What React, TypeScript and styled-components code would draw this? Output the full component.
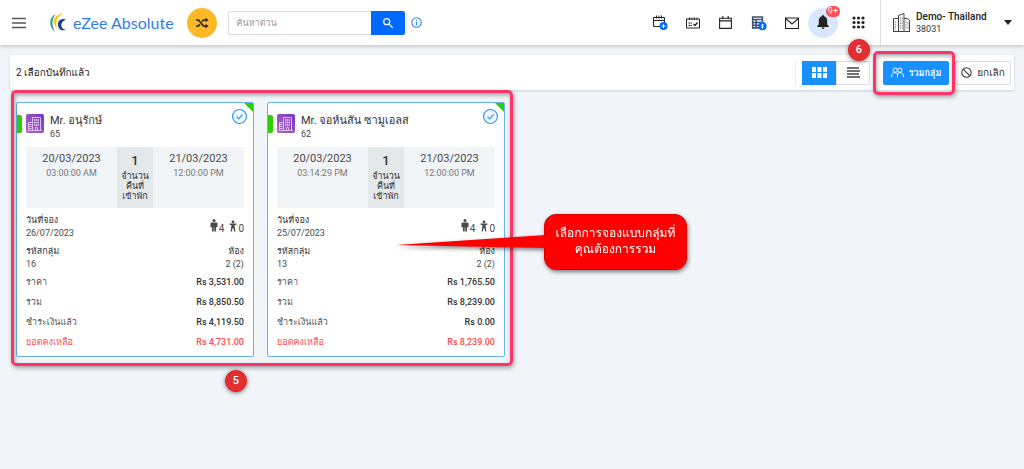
import React from "react";
import styled, { createGlobalStyle, css } from "styled-components";

const GlobalStyle = createGlobalStyle`
  *, *::before, *::after { box-sizing: border-box; }
  body {
    margin: 0;
    background: #f1f5f9;
    color: #4a4a4a;
    font-family: Roboto, Loma, Waree, "Noto Sans Thai Looped", "Noto Sans Thai", "Noto Sans", sans-serif;
    font-size: 9px;
    line-height: 12px;
  }
  button, input { font-family: inherit; }
  button { cursor: pointer; }
`;

const Page = styled.div`
  min-height: 100vh;
`;

/* ---------- Header ---------- */

const Header = styled.header`
  display: flex;
  align-items: center;
  height: 45px;
  padding: 0 12px 0 10px;
  background: #fff;
  box-shadow: 0 1px 4px rgba(0, 0, 0, 0.25);
`;

const IconButton = styled.button`
  display: flex;
  align-items: center;
  justify-content: center;
  width: 17px;
  height: 24px;
  padding: 0;
  border: 0;
  background: none;
  color: #222;
`;

const Logo = styled.a`
  display: flex;
  align-items: center;
  gap: 6px;
  margin-left: 22px;
  color: #2f80ed;
  font-family: Lato, sans-serif;
  font-size: 16px;
  line-height: 20px;
  text-decoration: none;
  white-space: nowrap;
`;

const ShuffleButton = styled(IconButton)`
  width: 30px;
  height: 30px;
  margin-left: 13px;
  border-radius: 50%;
  background: #fdb827;
`;

const Search = styled.form`
  display: flex;
  width: 177px;
  height: 24px;
  margin: 0 6px 0 11px;
`;

const SearchInput = styled.input`
  flex: 1;
  min-width: 0;
  padding: 0 8px;
  border: 1px solid #ddd;
  border-right: 0;
  border-radius: 2px 0 0 2px;
  color: #444;
  font-size: 9px;
  outline: 0;
  &::placeholder { color: #999; opacity: 1; }
`;

const SearchButton = styled(IconButton)`
  width: 34px;
  border-radius: 0 2px 2px 0;
  background: #0069ff;
`;

const Tools = styled.nav`
  display: flex;
  align-items: center;
  gap: 16px;
  margin-left: auto;
`;

const BellButton = styled(IconButton)`
  position: relative;
  width: 30px;
  height: 30px;
  margin: 0 -4px 0 -8px;
  border-radius: 50%;
  background: #d9e7fd;
`;

const Count = styled.span`
  position: absolute;
  top: -2px;
  right: -2px;
  padding: 0 2px;
  border-radius: 6px;
  background: #ff4d4f;
  color: #fff;
  font-size: 9px;
  line-height: 11px;
`;

const Account = styled.button`
  display: flex;
  align-items: center;
  height: 45px;
  width: 132px;
  margin-left: 13px;
  padding: 0 0 0 12px;
  border: 0;
  border-left: 1px solid #ddd;
  background: none;
  color: #333;
  text-align: left;
  font-size: 9px;
  line-height: 12px;
`;

const AccountText = styled.span`
  flex: 1;
  margin-left: 6px;
  white-space: nowrap;
  strong { display: block; font-size: 10px; font-weight: 500; color: #222; }
`;

/* ---------- Selection toolbar ---------- */

const Toolbar = styled.section`
  display: flex;
  align-items: center;
  height: 35px;
  margin: 10px 10px 12px;
  padding: 0 3px 0 6px;
  background: #fff;
  border-radius: 2px;
  box-shadow: 0 1px 3px rgba(60, 80, 100, 0.2);
`;

const SelectedText = styled.p`
  flex: 1;
  margin: 0;
  color: #222;
  font-size: 10px;
`;

const ViewSwitch = styled.div`
  display: flex;
  padding-left: 6px;
  border-left: 1px solid #eee;
`;

const ViewButton = styled(IconButton)<{ $active?: boolean }>`
  width: 34px;
  border: 1px solid #ddd;
  color: #444;
  ${(p) => p.$active && css`background: #1890ff; border-color: #1890ff; color: #fff;`}
`;

const Actions = styled.div`
  display: flex;
  gap: 6px;
  margin-left: 13px;
`;

const ActionWrap = styled.div`
  position: relative;
`;

const ActionButton = styled.button<{ $primary?: boolean }>`
  display: flex;
  align-items: center;
  justify-content: center;
  gap: 5px;
  min-width: ${(p) => (p.$primary ? 66 : 56)}px;
  height: 24px;
  padding: 0 5px;
  border: 1px solid ${(p) => (p.$primary ? "#1890ff" : "#ddd")};
  border-radius: 2px;
  background: ${(p) => (p.$primary ? "#1890ff" : "#fff")};
  color: ${(p) => (p.$primary ? "#fff" : "#333")};
  font-size: ${(p) => (p.$primary ? 9 : 10)}px;
  font-weight: ${(p) => (p.$primary ? 700 : 400)};
  white-space: nowrap;
`;

/* ---------- Booking cards ---------- */

const Main = styled.main`
  padding: 0 16px 48px;
`;

const CardGroup = styled.div`
  position: relative;
  display: grid;
  grid-template-columns: 1fr 1fr;
  gap: 13px;
  width: calc(50% - 7px);
`;

const Card = styled.article`
  position: relative;
  padding: 11px 9px 4px;
  border: 1px solid #69b1f5;
  border-radius: 2px;
  background: #fff;
`;

const StatusTab = styled.span`
  position: absolute;
  top: 12px;
  left: 0;
  width: 5px;
  height: 18px;
  border-radius: 0 2px 2px 0;
  background: #2fd000;
`;

const Corner = styled.span`
  position: absolute;
  top: 0;
  right: 0;
  border-top: 9px solid #2fd000;
  border-left: 9px solid transparent;
`;

const Check = styled.svg`
  position: absolute;
  top: 5px;
  right: 5px;
`;

const Guest = styled.header`
  display: flex;
  align-items: flex-start;
  gap: 6px;
  height: 33px;
`;

const GuestName = styled.h2`
  margin: 0;
  color: #333;
  font-size: 11px;
  font-weight: 400;
  line-height: 13px;
  white-space: nowrap;
`;

const GuestId = styled.p`
  margin: 1px 0 0;
`;

const Stay = styled.div`
  display: grid;
  grid-template-columns: 1fr 36px 1fr;
  height: 61px;
  margin-bottom: 6px;
  background: #f1f5f8;
  text-align: center;
`;

const StayDate = styled.div`
  padding-top: 5px;
  color: #777;
  line-height: 14px;
  strong { display: block; color: #4a4a4a; font-size: 11px; font-weight: 400; }
`;

const Nights = styled.div`
  padding-top: 7px;
  background: #e3e8eb;
  color: #333;
  line-height: 10px;
  strong { display: block; margin-bottom: 3px; font-size: 13px; font-weight: 500; line-height: 14px; }
`;

const InfoRow = styled.div`
  display: flex;
  align-items: center;
  justify-content: space-between;
  height: 26px;
  line-height: 13px;
  & + & { margin-top: 5px; }
`;

const InfoCell = styled.div<{ $end?: boolean }>`
  text-align: ${(p) => (p.$end ? "right" : "left")};
  span { display: block; color: #333; }
`;

const People = styled.div`
  display: flex;
  align-items: center;
  gap: 5px;
  font-size: 10px;
  span { display: flex; align-items: flex-end; gap: 1px; }
  svg { margin-bottom: 3px; }
`;

const Amounts = styled.dl`
  margin: 1px 0 0;
`;

const Amount = styled.div<{ $due?: boolean }>`
  display: flex;
  align-items: center;
  justify-content: space-between;
  height: 20px;
  color: ${(p) => (p.$due ? "#ff4d4f" : "#555")};
  dd { margin: 0; font-weight: 500; color: ${(p) => (p.$due ? "#ff4d4f" : "#333")}; }
`;

/* ---------- Guide annotations ---------- */

const frame = css`
  position: absolute;
  border: 3px solid #fb3569;
  border-radius: 5px;
  pointer-events: none;
  box-shadow: 1px 2px 4px rgba(0, 0, 0, 0.35), inset 1px 2px 4px rgba(0, 0, 0, 0.35);
`;

const GroupFrame = styled.div`
  ${frame}
  inset: -12px -8px -9px -5px;
`;

const ButtonFrame = styled.div`
  ${frame}
  inset: -10px -6px -10px -10px;
`;

const Step = styled.span`
  position: absolute;
  display: grid;
  place-items: center;
  width: 22px;
  height: 22px;
  border-radius: 50%;
  border: 1px solid #f01818;
  background: #e03034;
  box-shadow: 0 1px 4px rgba(0, 0, 0, 0.5);
  color: #fff;
  font-size: 11px;
  font-weight: 500;
`;

const GroupStep = styled(Step)`
  bottom: -35px;
  left: 209px;
`;

const ButtonStep = styled(Step)`
  top: -22px;
  left: -35px;
`;

const Callout = styled.aside`
  position: absolute;
  top: 112px;
  left: calc(100% + 39px);
  width: 143px;
  padding: 10px 4px 12px;
  border: 1px solid #d00;
  border-radius: 12px;
  background: #f00;
  filter: drop-shadow(1px 2px 2px rgba(0, 0, 0, 0.5));
  color: #fff;
  font-size: 12px;
  font-weight: 500;
  line-height: 16px;
  text-align: center;
  white-space: nowrap;
  svg { position: absolute; top: 18px; right: 100%; margin-right: -1px; }
`;

/* ---------- Icons ---------- */

type StrokeProps = { size?: number; color?: string; width?: number; children: React.ReactNode };
const Stroke = ({ size = 14, color = "#222", width = 1, children }: StrokeProps) => (
  <svg width={size} height={size} viewBox="0 0 14 14" fill="none" stroke={color} strokeWidth={width} aria-hidden="true">
    {children}
  </svg>
);

const CalendarPath = () => <path d="M1.5 3h11v9.5h-11zM1.5 5.500h11M4.500 1v3M9.500 1v3" />;

const LogoMark = () => (
  <svg width="18" height="20" viewBox="0 0 18 20" fill="none" aria-hidden="true">
    <path d="M7 1C0 4-1 13 6 19 2.500 12 2.500 6 7 1z" fill="#2a9d9a" />
    <path d="M14 1C5 1 2 9 8 15.500 6 9 8 3 14 1z" fill="#f6c915" />
    <path d="M17 6.500C10 4 6.500 11 11 16.500c2 1 4 1 6 .5-6-1-6.500-8 0-10.500z" fill="#1d3e86" />
  </svg>
);

const Hotel = () => (
  <svg width="18" height="19" viewBox="0 0 18 19" fill="none" aria-hidden="true">
    <defs>
      <linearGradient id="hotel" x1="0" y1="1" x2="1" y2="0">
        <stop offset="0" stopColor="#b366c4" />
        <stop offset="1" stopColor="#7336c4" />
      </linearGradient>
    </defs>
    <rect width="18" height="19" rx="2" fill="url(#hotel)" />
    <path d="M6.500 16V3.500h8V16M2 16.500h14M2.500 16V8.500h4M3 10.500h2.500M3 12.500h2.500M3 14.500h2.500M9.500 16v-2.500h2V16" stroke="#e7c8f5" strokeWidth=".9" />
    <path d="M8 6h5M8 8.500h5M8 11h5" stroke="#f3dcff" strokeWidth="1.400" strokeDasharray="1.300 .55" />
  </svg>
);

const Person = ({ child = false }: { child?: boolean }) => (
  <svg width="8" height="13" viewBox="0 0 8 13" fill="#4a4a4a" aria-hidden="true">
    {child ? (
      <>
        <circle cx="4" cy="2.800" r="1.400" />
        <path d="M.6 4.600h6.800v1.200L5.500 6.300l.9 6.200H5.200L4.300 9h-.6l-.9 3.500H1.600l.9-6.200L.6 5.800z" />
      </>
    ) : (
      <>
        <circle cx="4" cy="1.600" r="1.500" />
        <path d="M1.800 3.500h4.400q1.300 0 1.300 1V8.300H6v4.200H4.300V8.500h-.6v4H2V8.300H.5V4.500q0-1 1.300-1z" />
      </>
    )}
  </svg>
);

/* ---------- Data ---------- */

type Booking = {
  name: string;
  id: number;
  arrival: [string, string];
  departure: [string, string];
  booked: string;
  group: number;
  amounts: string[];
};

const bookings: Booking[] = [
  {
    name: "Mr. อนุรักษ์", id: 65,
    arrival: ["20/03/2023", "03:00:00 AM"], departure: ["21/03/2023", "12:00:00 PM"],
    booked: "26/07/2023", group: 16,
    amounts: ["Rs 3,531.00", "Rs 8,850.50", "Rs 4,119.50", "Rs 4,731.00"],
  },
  {
    name: "Mr. จอห์นสัน ซามูเอลส", id: 62,
    arrival: ["20/03/2023", "03:14:29 PM"], departure: ["21/03/2023", "12:00:00 PM"],
    booked: "25/07/2023", group: 13,
    amounts: ["Rs 1,765.50", "Rs 8,239.00", "Rs 0.00", "Rs 8,239.00"],
  },
];

const amountLabels = ["ราคา", "รวม", "ชำระเงินแล้ว", "ยอดคงเหลือ"];

const BookingCard = ({ booking }: { booking: Booking }) => (
  <Card>
    <StatusTab />
    <Corner />
    <Check width="17" height="17" viewBox="0 0 17 17" fill="none" stroke="#3498f5">
      <circle cx="8.500" cy="8.500" r="7" fill="#eef7ff" strokeWidth="1.200" />
      <path d="M5.500 8.600l2.200 2.200 3.800-4.300" strokeWidth="1.200" />
    </Check>
    <Guest>
      <Hotel />
      <div>
        <GuestName>{booking.name}</GuestName>
        <GuestId>{booking.id}</GuestId>
      </div>
    </Guest>
    <Stay>
      <StayDate><strong>{booking.arrival[0]}</strong>{booking.arrival[1]}</StayDate>
      <Nights><strong>1</strong>จำนวน<br />คืนที่<br />เข้าพัก</Nights>
      <StayDate><strong>{booking.departure[0]}</strong>{booking.departure[1]}</StayDate>
    </Stay>
    <InfoRow>
      <InfoCell><span>วันที่จอง</span>{booking.booked}</InfoCell>
      <People><span><Person />4</span><span><Person child />0</span></People>
    </InfoRow>
    <InfoRow>
      <InfoCell><span>รหัสกลุ่ม</span>{booking.group}</InfoCell>
      <InfoCell $end><span>ห้อง</span>2 (2)</InfoCell>
    </InfoRow>
    <Amounts>
      {booking.amounts.map((value, i) => (
        <Amount key={amountLabels[i]} $due={i === 3}>
          <dt>{amountLabels[i]}</dt>
          <dd>{value}</dd>
        </Amount>
      ))}
    </Amounts>
  </Card>
);

export default function App() {
  return (
    <Page>
      <GlobalStyle />
      <Header>
        <IconButton aria-label="Menu">
          <Stroke color="#555" width={1.3}><path d="M0 2.500h14M0 7h14M0 11.500h14" /></Stroke>
        </IconButton>
        <Logo href="#"><LogoMark />eZee Absolute</Logo>
        <ShuffleButton aria-label="Shuffle">
          <Stroke width={1.6}>
            <path d="M1 4h2.500l5 6H12M1 10h2.500L5 8.200M7 5.800L8.500 4H12" />
            <path d="M10.500 1.800L13.500 4l-3 2.200zM10.500 7.800l3 2.200-3 2.200z" fill="#222" stroke="none" />
          </Stroke>
        </ShuffleButton>
        <Search onSubmit={(e) => e.preventDefault()}>
          <SearchInput aria-label="ค้นหาด่วน" placeholder="ค้นหาด่วน" />
          <SearchButton aria-label="Search">
            <Stroke size={12} color="#fff" width={1.4}><circle cx="5.500" cy="5.500" r="3.500" /><path d="M8 8l4.500 4.500" /></Stroke>
          </SearchButton>
        </Search>
        <Stroke size={11} color="#2f80ed" width={1.3}><circle cx="7" cy="7" r="6" /><path d="M7 6v4.500M7 3.500v1.300" /></Stroke>
        <Tools>
          <IconButton aria-label="Add booking">
            <svg width="17" height="17" viewBox="0 0 17 17" fill="none" stroke="#222" aria-hidden="true">
              <path d="M2.500 3.500h11v9h-11zM2.500 6.500h11M5.500 1.500v3M8 1.500v3M10.500 1.500v3" />
              <circle cx="12.500" cy="12" r="4" fill="#0069ff" stroke="none" />
              <path d="M10.500 12h4M12.500 10v4" stroke="#fff" />
            </svg>
          </IconButton>
          <IconButton aria-label="Tasks">
            <Stroke><path d="M.5 3h13v9H.5zM3.500 1.500v2.500M6 1.500v2.500M8.500 1.500v2.500M11 1.500v2.500" /><path d="M2.500 7h3.500M2.500 9.500h3.500" strokeDasharray="1.500 .5" /><path d="M7.500 8l1.500 1.500 2.500-3" strokeWidth="1.300" /></Stroke>
          </IconButton>
          <IconButton aria-label="Calendar"><Stroke size={15}><CalendarPath /></Stroke></IconButton>
          <IconButton aria-label="Rates">
            <Stroke size={16} color="#3f5573">
              <path d="M1.500 1.700h8.500v9.600H1.500zM1.500 4H10M1.500 6.500H10M1.500 9H10M4.500 4v7" strokeWidth="1.400" />
              <circle cx="10" cy="9.800" r="3.600" fill="#0069ff" stroke="none" />
              <path d="M11.200 8.500H9.500q-.8.700 0 1.300h1q.8.700 0 1.300H8.900M10 7.700v4.200" stroke="#fff" strokeWidth=".7" />
            </Stroke>
          </IconButton>
          <IconButton aria-label="Mail"><Stroke width={1.1}><path d="M.5 2h13v10.500H.5zM.5 2.500L7 8l6.500-5.500" /></Stroke></IconButton>
          <BellButton aria-label="Notifications">
            <svg width="14" height="15" viewBox="0 0 14 15" fill="#222" aria-hidden="true">
              <path d="M7 0q1 0 1 1.300 3 .7 3.200 4.200v4l1.500 1.500v1H1.300v-1l1.500-1.500v-4Q3 2 6 1.300 6 0 7 0zM5.500 12.500h3q-.3 1.500-1.500 1.500t-1.500-1.500z" />
            </svg>
            <Count>9+</Count>
          </BellButton>
          <IconButton aria-label="Apps">
            <svg width="13" height="13" viewBox="0 0 13 13" fill="#222" aria-hidden="true">
              {[2, 6.5, 11].map((x) => [2, 6.5, 11].map((y) => <circle key={`${x}-${y}`} cx={x} cy={y} r="1.600" />))}
            </svg>
          </IconButton>
        </Tools>
        <Account>
          <svg width="17" height="19" viewBox="0 0 17 19" fill="none" stroke="#444" aria-hidden="true">
            <path d="M5.500 18V2.500l5.500-2V18M.5 18V5.500h5M11 5.500h3l2.500 2V18M0 18.500h17" />
            <path d="M7.300 4v12M9.300 4v12M2.300 8v8.500M13 8v8.500M15 9v7.500" stroke="#777" strokeWidth=".8" strokeDasharray="1.800 .8" />
          </svg>
          <AccountText><strong>Demo- Thailand</strong>38031</AccountText>
          <svg width="8" height="5" viewBox="0 0 8 5" fill="#222" aria-hidden="true"><path d="M0 0h8L4 5z" /></svg>
        </Account>
      </Header>

      <Toolbar>
        <SelectedText>2 เลือกบันทึกแล้ว</SelectedText>
        <ViewSwitch>
          <ViewButton $active aria-label="Grid view">
            <svg width="15" height="11" viewBox="0 0 15 11" fill="currentColor" aria-hidden="true">
              <path d="M0 0h4v5H0zM5.500 0h4v5h-4zM11 0h4v5h-4zM0 6h4v5H0zM5.500 6h4v5h-4zM11 6h4v5h-4z" />
            </svg>
          </ViewButton>
          <ViewButton aria-label="List view">
            <svg width="13" height="11" viewBox="0 0 13 11" stroke="currentColor" strokeWidth="1.500" aria-hidden="true">
              <path d="M0 1h12M0 4h13M0 7h12M0 10h13" />
            </svg>
          </ViewButton>
        </ViewSwitch>
        <Actions>
          <ActionWrap>
            <ActionButton $primary>
              <Stroke size={13} color="#fff">
                <circle cx="4.500" cy="4.500" r="2.300" /><circle cx="9.500" cy="4.500" r="2.300" />
                <path d="M.5 12q0-5 4-5 2 0 2.500 2 .5-2 2.500-2 4 0 4 5M7 9v3" />
              </Stroke>
              รวมกลุ่ม
            </ActionButton>
            <ButtonFrame />
            <ButtonStep>6</ButtonStep>
          </ActionWrap>
          <ActionButton>
            <Stroke size={11} color="#333" width={1.3}><circle cx="7" cy="7" r="6" /><path d="M2.800 2.800l8.400 8.400" /></Stroke>
            ยกเลิก
          </ActionButton>
        </Actions>
      </Toolbar>

      <Main>
        <CardGroup>
          {bookings.map((b) => <BookingCard key={b.id} booking={b} />)}
          <GroupFrame />
          <GroupStep>5</GroupStep>
          <Callout>
            <svg width="150" height="16" viewBox="0 0 150 16" fill="#f00" aria-hidden="true">
              <path d="M0 12L150 2v13z" />
            </svg>
            เลือกการจองแบบกลุ่มที่<br />คุณต้องการรวม
          </Callout>
        </CardGroup>
      </Main>
    </Page>
  );
}
